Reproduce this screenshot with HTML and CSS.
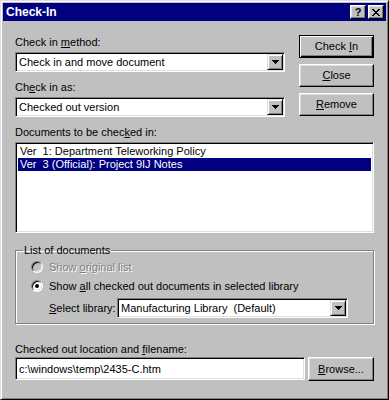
FILE: index.html
```html
<!DOCTYPE html>
<html lang="en">
<head>
    <meta charset="UTF-8">
    <title>Check-In</title>
    <link rel="stylesheet" href="styles.css">
</head>
<body>
    <div class="window">
        <div class="titlebar">
            <span class="title">Check-In</span>
            <div class="title-buttons">
                <span class="tbtn help">?</span>
                <span class="tbtn close">
                    <svg width="8" height="7" viewBox="0 0 8 7" shape-rendering="crispEdges">
                        <rect x="0" y="0" width="2" height="1"/><rect x="6" y="0" width="2" height="1"/>
                        <rect x="1" y="1" width="2" height="1"/><rect x="5" y="1" width="2" height="1"/>
                        <rect x="2" y="2" width="4" height="1"/>
                        <rect x="3" y="3" width="2" height="1"/>
                        <rect x="2" y="4" width="4" height="1"/>
                        <rect x="1" y="5" width="2" height="1"/><rect x="5" y="5" width="2" height="1"/>
                        <rect x="0" y="6" width="2" height="1"/><rect x="6" y="6" width="2" height="1"/>
                    </svg>
                </span>
            </div>
        </div>

        <div class="client">
            <div class="top-row">
                <div class="fields">
                    <div class="label">Check in <u>m</u>ethod:</div>
                    <div class="combo">
                        <span class="combo-text">Check in and move document</span>
                        <span class="drop"><svg width="7" height="4" viewBox="0 0 7 4" shape-rendering="crispEdges"><rect x="0" y="0" width="7" height="1"/><rect x="1" y="1" width="5" height="1"/><rect x="2" y="2" width="3" height="1"/><rect x="3" y="3" width="1" height="1"/></svg></span>
                    </div>
                    <div class="label spaced">Ch<u>e</u>ck in as:</div>
                    <div class="combo">
                        <span class="combo-text">Checked out version</span>
                        <span class="drop"><svg width="7" height="4" viewBox="0 0 7 4" shape-rendering="crispEdges"><rect x="0" y="0" width="7" height="1"/><rect x="1" y="1" width="5" height="1"/><rect x="2" y="2" width="3" height="1"/><rect x="3" y="3" width="1" height="1"/></svg></span>
                    </div>
                </div>
                <div class="buttons">
                    <button class="btn default">Check <u>I</u>n</button>
                    <button class="btn"><u>C</u>lose</button>
                    <button class="btn"><u>R</u>emove</button>
                </div>
            </div>

            <div class="label spaced">Documents to be chec<u>k</u>ed in:</div>
            <ul class="listbox">
                <li>Ver  1: Department Teleworking Policy</li>
                <li class="selected">Ver  3 (Official): Project 9IJ Notes</li>
            </ul>

            <fieldset class="group">
                <legend>List of documents</legend>
                <div class="radio-row disabled">
                    <span class="radio"></span>
                    <span>Show <u>o</u>riginal list</span>
                </div>
                <div class="radio-row">
                    <span class="radio checked"></span>
                    <span>Show <u>a</u>ll checked out documents in selected library</span>
                </div>
                <div class="library-row">
                    <span class="lib-label"><u>S</u>elect library:</span>
                    <div class="combo lib">
                        <span class="combo-text">Manufacturing Library  (Default)</span>
                        <span class="drop"><svg width="7" height="4" viewBox="0 0 7 4" shape-rendering="crispEdges"><rect x="0" y="0" width="7" height="1"/><rect x="1" y="1" width="5" height="1"/><rect x="2" y="2" width="3" height="1"/><rect x="3" y="3" width="1" height="1"/></svg></span>
                    </div>
                </div>
            </fieldset>

            <div class="label bottom-label">Checked out location and <u>f</u>ilename:</div>
            <div class="path-row">
                <div class="textfield">c:\windows\temp\2435-C.htm</div>
                <button class="btn browse"><u>B</u>rowse...</button>
            </div>
        </div>
    </div>
</body>
</html>
```

FILE: styles.css
```css
body {
    margin: 0;
    background: #c0c0c0;
    font-family: "Liberation Sans", Arial, sans-serif;
    font-size: 11px;
    line-height: 13px;
    color: #000;
}
u { text-underline-offset: 1px; }

.window {
    width: 389px;
    height: 400px;
    box-sizing: border-box;
    padding: 2px;
    border: 1px solid;
    border-color: #dfdfdf #000 #000 #dfdfdf;
    box-shadow: inset 1px 1px #fff, inset -1px -1px #808080;
    background: #c0c0c0;
}

/* title bar */
.titlebar {
    height: 18px;
    background: #000080;
    color: #fff;
    display: flex;
    align-items: center;
    padding: 0 2px 0 3px;
}
.title { font-weight: bold; font-size: 12px; flex: 1; }
.title-buttons { display: flex; gap: 2px; }
.tbtn {
    width: 16px;
    height: 14px;
    box-sizing: border-box;
    background: #c0c0c0;
    border: 1px solid;
    border-color: #fff #000 #000 #fff;
    box-shadow: inset -1px -1px #808080, inset 1px 1px #dfdfdf;
    display: flex;
    align-items: center;
    justify-content: center;
    color: #000;
}
.help { font-weight: bold; font-size: 11px; line-height: 12px; }

/* client area */
.client { padding: 14px 12px 0 12px; }
.top-row { display: flex; align-items: flex-start; }
.fields { width: 270px; padding-top: 1px; }
.buttons {
    margin-left: 14px;
    width: 75px;
    display: flex;
    flex-direction: column;
    gap: 6px;
}
.label { height: 13px; margin-bottom: 3px; white-space: nowrap; }
.spaced { margin-top: 9px; }

/* sunken fields */
.combo, .listbox, .textfield {
    box-sizing: border-box;
    background: #fff;
    border: 1px solid;
    border-color: #808080 #fff #fff #808080;
    box-shadow: inset 1px 1px #000, inset -1px -1px #dfdfdf;
}
.combo {
    height: 20px;
    display: flex;
    align-items: center;
    padding: 1px 1px 1px 3px;
}
.combo-text { flex: 1; white-space: pre; }
.drop {
    width: 16px;
    height: 16px;
    box-sizing: border-box;
    background: #c0c0c0;
    border: 1px solid;
    border-color: #dfdfdf #000 #000 #dfdfdf;
    box-shadow: inset 1px 1px #fff, inset -1px -1px #808080;
    display: flex;
    align-items: center;
    justify-content: center;
}
.drop svg { display: block; }

/* push buttons */
.btn {
    height: 23px;
    box-sizing: border-box;
    font: inherit;
    color: #000;
    background: #c0c0c0;
    border: 1px solid;
    border-color: #fff #000 #000 #fff;
    box-shadow: inset -1px -1px #808080, inset 1px 1px #dfdfdf;
    padding: 0;
}
.btn.default {
    border-color: #000;
    box-shadow: inset 1px 1px #fff, inset -1px -1px #000, inset -2px -2px #808080;
}

/* list box */
.listbox {
    list-style: none;
    margin: 0;
    height: 91px;
    padding: 2px;
}
.listbox li { height: 13px; padding-left: 2px; white-space: pre; }
.listbox .selected { background: #000080; color: #fff; }

/* group box */
.group {
    margin: 11px 0 0 0;
    padding: 2px 0 5px 0;
    border: 1px solid #808080;
    box-shadow: inset 1px 1px #fff, 1px 1px #fff;
    min-width: 0;
}
.group legend { padding: 0 1px; margin-left: 7px; line-height: 13px; }
.radio-row {
    height: 16px;
    padding-left: 15px;
    display: flex;
    align-items: center;
    gap: 6px;
    white-space: nowrap;
}
.radio-row + .radio-row { margin-top: 3px; }
.radio {
    width: 12px;
    height: 12px;
    box-sizing: border-box;
    border-radius: 50%;
    border: 1px solid;
    border-color: #808080 #fff #fff #808080;
    box-shadow: inset 1px 1px #000, inset -1px -1px #dfdfdf;
    background: #fff;
    display: flex;
    align-items: center;
    justify-content: center;
}
.radio.checked::after {
    content: "";
    width: 4px;
    height: 4px;
    border-radius: 50%;
    background: #000;
}
.disabled { color: #808080; text-shadow: 1px 1px #fff; }
.disabled .radio { background: #c0c0c0; }
.library-row { display: flex; align-items: center; margin-top: 4px; padding-left: 33px; }
.lib-label { width: 68px; }
.combo.lib { width: 231px; }

/* bottom */
.bottom-label { margin-top: 19px; margin-bottom: 1px; }
.path-row { display: flex; align-items: flex-start; }
.textfield { width: 290px; height: 23px; padding: 5px 3px; }
.btn.browse { width: 66px; height: 24px; margin-left: 3px; }
```
